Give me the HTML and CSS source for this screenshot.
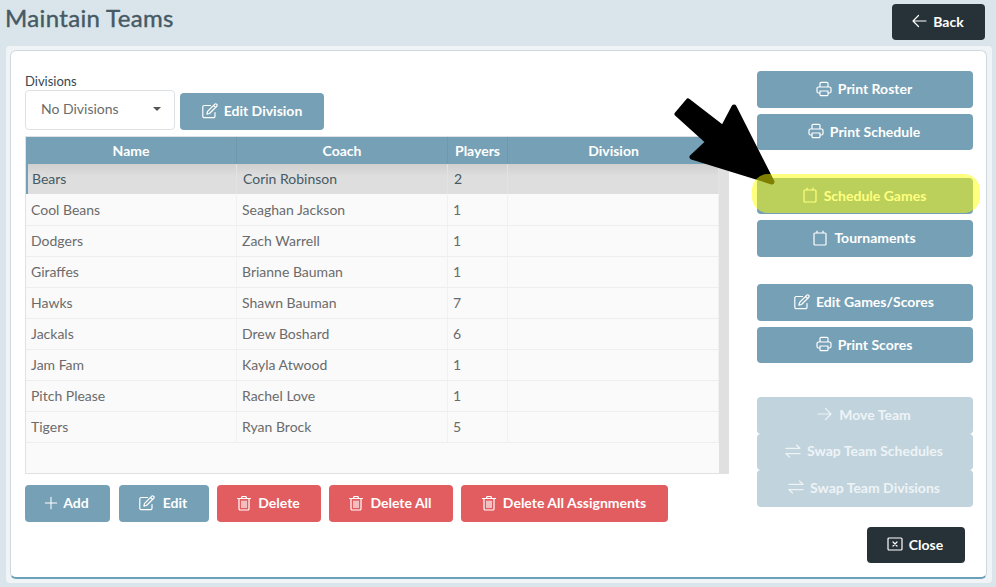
FILE: index.html
```html
<!DOCTYPE html>
<html lang="en">
<head>
    <meta charset="UTF-8">
    <title>Maintain Teams</title>
    <link rel="stylesheet" href="styles.css">
</head>
<body>
    <svg class="sprites" width="0" height="0">
        <symbol id="i-print" viewBox="0 0 16 16"><path d="M4 6V2.500A1.200 1.200 0 0 1 5.200 1.300h5.600A1.200 1.200 0 0 1 12 2.500V6M4 12H2.500A1.500 1.500 0 0 1 1 10.500V7.500A1.500 1.500 0 0 1 2.500 6h11A1.500 1.500 0 0 1 15 7.500v3a1.500 1.500 0 0 1-1.500 1.500H12M4 10h8v3.500a1.200 1.200 0 0 1-1.200 1.200H5.200A1.200 1.200 0 0 1 4 13.500z"/></symbol>
        <symbol id="i-edit" viewBox="0 0 16 16"><path d="M13 9.500v3.700a1.500 1.500 0 0 1-1.500 1.500H2.300A1.500 1.500 0 0 1 .8 13.200V4A1.500 1.500 0 0 1 2.300 2.500h6.200M5.500 8.500l7.300-7.300a1.200 1.200 0 0 1 1.700 0l.3.300a1.200 1.200 0 0 1 0 1.700L7.500 10.500l-2.600.6zM11.500 2.500l2 2"/></symbol>
        <symbol id="i-cal" viewBox="0 0 16 16"><path d="M3 3h10a1 1 0 0 1 1 1v10a1 1 0 0 1-1 1H3a1 1 0 0 1-1-1V4a1 1 0 0 1 1-1zM5 1v2M11 1v2"/></symbol>
        <symbol id="i-left" viewBox="0 0 16 16"><path d="M15 8H2M7.500 2.500 2 8l5.500 5.500"/></symbol>
        <symbol id="i-right" viewBox="0 0 16 16"><path d="M1 8h13M8.500 2.500 14 8l-5.500 5.500"/></symbol>
        <symbol id="i-swap" viewBox="0 0 16 16"><path d="M1 5.300h14M11.500 2l3.500 3.300M15 10.700H1M4.500 14 1 10.700"/></symbol>
        <symbol id="i-plus" viewBox="0 0 16 16"><path d="M8 1.500v13M1.500 8h13"/></symbol>
        <symbol id="i-trash" viewBox="0 0 16 16"><path d="M1.500 3.500h13M3 3.500v10.300A1.200 1.200 0 0 0 4.200 15h7.600a1.200 1.200 0 0 0 1.200-1.200V3.500M5.500 3.500 6 1.500h4l.5 2M6 6v6.500M8 6v6.500M10 6v6.500"/></symbol>
        <symbol id="i-close" viewBox="0 0 16 16"><path d="M2 2h12a1 1 0 0 1 1 1v10a1 1 0 0 1-1 1H2a1 1 0 0 1-1-1V3a1 1 0 0 1 1-1zM6 6l4 4M10 6l-4 4"/></symbol>
    </svg>

    <header class="top_bar">
        <h1 class="page_title">Maintain Teams</h1>
        <button class="btn btn_dark back_btn"><svg class="icon"><use href="#i-left"/></svg>Back</button>
    </header>

    <div class="card_outer">
        <main class="card">
            <section class="left_col">
                <label class="field_label">Divisions</label>
                <div class="division_row">
                    <div class="select_box"><span>No Divisions</span><i class="caret"></i></div>
                    <button class="btn btn_blue edit_division"><svg class="icon"><use href="#i-edit"/></svg>Edit Division</button>
                </div>

                <div class="team_table">
                    <div class="table_row table_head">
                        <div class="cell">Name</div>
                        <div class="cell">Coach</div>
                        <div class="cell">Players</div>
                        <div class="cell">Division</div>
                    </div>
                    <div class="table_body">
                        <div class="rows">
                            <div class="table_row selected">
                                <div class="cell">Bears</div><div class="cell">Corin Robinson</div><div class="cell">2</div><div class="cell"></div>
                            </div>
                            <div class="table_row">
                                <div class="cell">Cool Beans</div><div class="cell">Seaghan Jackson</div><div class="cell">1</div><div class="cell"></div>
                            </div>
                            <div class="table_row">
                                <div class="cell">Dodgers</div><div class="cell">Zach Warrell</div><div class="cell">1</div><div class="cell"></div>
                            </div>
                            <div class="table_row">
                                <div class="cell">Giraffes</div><div class="cell">Brianne Bauman</div><div class="cell">1</div><div class="cell"></div>
                            </div>
                            <div class="table_row">
                                <div class="cell">Hawks</div><div class="cell">Shawn Bauman</div><div class="cell">7</div><div class="cell"></div>
                            </div>
                            <div class="table_row">
                                <div class="cell">Jackals</div><div class="cell">Drew Boshard</div><div class="cell">6</div><div class="cell"></div>
                            </div>
                            <div class="table_row">
                                <div class="cell">Jam Fam</div><div class="cell">Kayla Atwood</div><div class="cell">1</div><div class="cell"></div>
                            </div>
                            <div class="table_row">
                                <div class="cell">Pitch Please</div><div class="cell">Rachel Love</div><div class="cell">1</div><div class="cell"></div>
                            </div>
                            <div class="table_row">
                                <div class="cell">Tigers</div><div class="cell">Ryan Brock</div><div class="cell">5</div><div class="cell"></div>
                            </div>
                        </div>
                        <div class="scroll_track"></div>
                    </div>
                </div>

                <div class="table_actions">
                    <button class="btn btn_blue add_btn"><svg class="icon"><use href="#i-plus"/></svg>Add</button>
                    <button class="btn btn_blue edit_btn"><svg class="icon"><use href="#i-edit"/></svg>Edit</button>
                    <button class="btn btn_red delete_btn"><svg class="icon"><use href="#i-trash"/></svg>Delete</button>
                    <button class="btn btn_red delete_all_btn"><svg class="icon"><use href="#i-trash"/></svg>Delete All</button>
                    <button class="btn btn_red delete_assign_btn"><svg class="icon"><use href="#i-trash"/></svg>Delete All Assignments</button>
                </div>
            </section>

            <aside class="right_col">
                <div class="btn_group">
                    <button class="btn btn_blue"><svg class="icon"><use href="#i-print"/></svg>Print Roster</button>
                    <button class="btn btn_blue"><svg class="icon"><use href="#i-print"/></svg>Print Schedule</button>
                </div>
                <div class="btn_group">
                    <button class="btn btn_blue"><svg class="icon"><use href="#i-cal"/></svg>Schedule Games</button>
                    <button class="btn btn_blue"><svg class="icon"><use href="#i-cal"/></svg>Tournaments</button>
                </div>
                <div class="btn_group">
                    <button class="btn btn_blue"><svg class="icon"><use href="#i-edit"/></svg>Edit Games/Scores</button>
                    <button class="btn btn_blue"><svg class="icon"><use href="#i-print"/></svg>Print Scores</button>
                </div>
                <div class="btn_group joined">
                    <button class="btn btn_off"><svg class="icon"><use href="#i-right"/></svg>Move Team</button>
                    <button class="btn btn_off"><svg class="icon"><use href="#i-swap"/></svg>Swap Team Schedules</button>
                    <button class="btn btn_off"><svg class="icon"><use href="#i-swap"/></svg>Swap Team Divisions</button>
                </div>
                <button class="btn btn_dark close_btn"><svg class="icon"><use href="#i-close"/></svg>Close</button>
            </aside>
        </main>
    </div>

    <!-- annotation drawn over the screenshot -->
    <svg class="arrow" viewBox="0 0 110 100" width="110" height="100">
        <path d="M14 6 3 19 34 47 18 62 98 87 60 12 49 33z"/>
    </svg>
    <div class="highlight"></div>
</body>
</html>
```

FILE: styles.css
```css
*{
    margin: 0;
    padding: 0;
    box-sizing: border-box;
}
body{
    width: 996px;
    height: 587px;
    position: relative;
    overflow: hidden;
    background: #dae5eb;
    font-family: Lato, "Open Sans", sans-serif;
    font-size: 14px;
    color: #37474f;
}
.sprites{
    position: absolute;
}
.icon{
    width: 16px;
    height: 16px;
    margin-right: 6px;
    fill: none;
    stroke: currentColor;
    stroke-width: 1.2;
    stroke-linecap: round;
    stroke-linejoin: round;
    flex: none;
}
.top_bar{
    height: 46px;
    display: flex;
    justify-content: space-between;
    padding: 4px 11px 0 5px;
}
.page_title{
    font-size: 24px;
    line-height: 28px;
    font-weight: 400;
    letter-spacing: 0.35px;
    -webkit-text-stroke: 0.4px #455a64;
    color: #455a64;
}
.btn{
    height: 37px;
    display: flex;
    align-items: center;
    justify-content: center;
    border: none;
    border-radius: 4px;
    font-family: inherit;
    font-size: 14px;
    font-weight: 700;
    color: #fff;
    padding: 0 2px 2px 0;
    white-space: nowrap;
}
.btn_blue{
    background: #76a0b5;
}
.btn_red{
    background: #e25d60;
}
.btn_dark{
    background: #263238;
}
.btn_off{
    background: #c1d3dd;
    color: #eef3f6;
}
.back_btn{
    width: 93px;
    height: 36px;
}
.card_outer{
    margin-left: 6px;
    width: 986px;
    height: 537px;
    padding: 4px 5px 4px 4px;
    background: #f0f4f7;
    border-radius: 4px;
}
.card{
    height: 100%;
    display: flex;
    justify-content: space-between;
    background: #fff;
    border: 1px solid #cfd8dc;
    border-bottom: 2px solid #6c9fb8;
    border-radius: 6px;
    padding: 20px 13px 0 14px;
}
.left_col{
    width: 704px;
}
.field_label{
    display: block;
    font-size: 13px;
    line-height: 18px;
    padding-top: 1px;
    color: #37474f;
}
.division_row{
    display: flex;
    align-items: flex-end;
    gap: 5px;
}
.select_box{
    width: 150px;
    height: 40px;
    display: flex;
    align-items: center;
    justify-content: space-between;
    border: 1px solid #dde1e3;
    border-radius: 4px;
    padding: 0 13px 3px 15px;
    color: #6b6b6b;
}
.caret{
    border-left: 4px solid transparent;
    border-right: 4px solid transparent;
    border-top: 4px solid #555;
}
.edit_division{
    width: 144px;
    padding-right: 0;
}
.team_table{
    margin-top: 6px;
    height: 338px;
    border: 1px solid #dfe2e4;
    border-right: none;
    display: flex;
    flex-direction: column;
    background: #fafafa;
}
.table_row{
    display: grid;
    grid-template-columns: 211px 211px 60px 1fr;
    height: 31px;
    border-bottom: 1px solid #eeeeee;
    color: #6b6b6b;
}
.cell{
    display: flex;
    align-items: center;
    padding: 0 0 2px 5px;
    border-right: 1px solid #f1f1f1;
}
.table_head{
    height: 27px;
    flex: none;
    border: none;
    background: #76a0b5;
    color: #fff;
    font-weight: 700;
}
.table_head .cell{
    justify-content: center;
    padding: 0;
    border-right: 1px solid #6f98ac;
}
.table_head .cell:last-child{
    border-right: none;
    padding-right: 10px;
}
.table_body{
    flex: 1;
    display: flex;
}
.rows{
    flex: 1;
}
.scroll_track{
    width: 10px;
    background: #e0e0e0;
}
.selected{
    height: 30px;
    margin-bottom: 1px;
    background: linear-gradient(#cfcfcf, #dedede 40%);
    color: #455a64;
    box-shadow: inset 2px 0 0 #76a0b5;
    border-bottom: none;
}
.selected .cell{
    padding-left: 6px;
    border-right-color: #e2e2e2;
}
.table_actions{
    margin-top: 11px;
    display: flex;
    gap: 8px;
}
.add_btn{
    width: 85px;
    margin-right: 1px;
}
.add_btn .icon{
    width: 14px;
    height: 14px;
    margin-right: 5px;
}
.edit_btn{
    width: 90px;
}
.edit_btn .icon{
    margin-right: 8px;
}
.delete_btn{
    width: 104px;
}
.delete_all_btn{
    width: 124px;
}
.delete_assign_btn{
    width: 207px;
}
.right_col{
    width: 216px;
    display: flex;
    flex-direction: column;
}
.btn_group{
    display: flex;
    flex-direction: column;
    gap: 6px;
    margin-bottom: 27.5px;
}
.btn_group .btn{
    height: 36.5px;
    padding-bottom: 1px;
}
.btn_group.joined{
    gap: 0;
    margin-top: 6.5px;
    margin-bottom: 20.5px;
}
.btn_group.joined .btn{
    padding-bottom: 2px;
}
.close_btn{
    width: 98px;
    height: 36px;
    margin-left: 110px;
}
.arrow{
    position: absolute;
    left: 674px;
    top: 95px;
}
.arrow path{
    fill: #000;
    stroke: #000;
    stroke-width: 5;
    stroke-linejoin: round;
}
.highlight{
    position: absolute;
    left: 752px;
    top: 174px;
    width: 228px;
    height: 39px;
    border-radius: 16px;
    background: rgba(255, 255, 0, 0.5);
}
```
